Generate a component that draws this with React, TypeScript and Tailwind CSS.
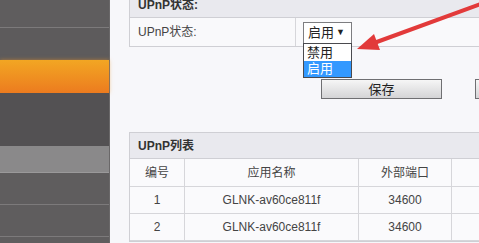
import React from 'react';

const font = { fontFamily: '"Liberation Sans", "Noto Sans CJK SC", sans-serif' };

function Sidebar() {
  return (
    <div className="flex w-[110px] flex-none flex-col border-r border-[#6a6869] bg-[#5f5d5e]">
      <div className="h-[28px] border-b border-[#7c7a7b] bg-[#5f5d5e]" />
      <div className="h-[32px] bg-[#5d5b5c]" />
      <div className="h-[33px] bg-gradient-to-b from-[#f2a623] to-[#ec7b1f] shadow-[0_0_4px_rgba(240,150,40,0.6)]" />
      <div className="h-[53px] bg-[#535153]" />
      <div className="h-[27px] border-b border-[#9a999a] bg-[#8a898a]" />
      <div className="h-[32px] border-b border-[#7c7a7b] bg-[#5f5d5e]" />
      <div className="h-[32px] border-b border-[#7c7a7b] bg-[#5f5d5e]" />
      <div className="flex-1 bg-[#5f5d5e]" />
    </div>
  );
}

function Arrow() {
  return (
    <svg className="pointer-events-none absolute left-0 top-0" width="479" height="243">
      <line x1="486" y1="2" x2="374" y2="43" stroke="#e23a3a" strokeWidth="4" strokeLinecap="round" />
      <polygon points="357,49 374,34 380,50" fill="#e23a3a" />
    </svg>
  );
}

export default function App() {
  const rows = [
    { id: '1', name: 'GLNK-av60ce811f', port: '34600' },
    { id: '2', name: 'GLNK-av60ce811f', port: '34600' },
  ];
  return (
    <div className="relative flex h-[243px] w-[479px] overflow-hidden bg-[#f7f7fa] text-[12px] text-[#333]" style={font}>
      <Sidebar />
      <div className="flex flex-1 flex-col pl-[19px]">
        {/* UPnP status panel */}
        <div className="w-[420px] flex-none border-x border-b border-[#cfcfd4]">
          <div className="h-[18px] border-b border-[#cfcfd4] bg-[#e9e9ee] pl-[8px] text-[12px] font-bold leading-[10px] text-[#333]">
            UPnP状态:
          </div>
          <div className="flex h-[28px] bg-[#f9f9fb]">
            <div className="flex w-[166px] items-center border-r border-[#d6d6da] pl-[8px] text-[#444]">UPnP状态:</div>
            <div className="relative flex-1">
              <div className="absolute left-[7px] top-[4px] z-10 w-[49px]">
                <div className="flex h-[22px] items-center justify-between border border-[#7d7d80] bg-white pl-[4px] pr-[6px] text-[13px] text-[#222]">
                  <span>启用</span>
                  <span className="text-[9px]">▼</span>
                </div>
                <div className="-mt-px border border-[#4a4a4e] bg-white text-[13px]">
                  <div className="h-[17px] pl-[3px] leading-[17px] text-[#222]">禁用</div>
                  <div className="h-[16px] bg-[#3399ff] pl-[3px] leading-[16px] text-white">启用</div>
                </div>
              </div>
            </div>
          </div>
        </div>

        {/* buttons */}
        <div className="mt-[32px] flex h-[20px] flex-none gap-[33px] pl-[192px]">
          <button className="h-[20px] w-[121px] flex-none border border-[#6f6f72] bg-gradient-to-b from-[#f6f6f6] to-[#d4d4d6] text-[13px] text-[#222]">
            保存
          </button>
          <button className="h-[20px] w-[80px] flex-none border border-[#6f6f72] bg-gradient-to-b from-[#f6f6f6] to-[#d4d4d6]" />
        </div>

        {/* UPnP list */}
        <div className="mt-[33px] w-[420px] flex-none border border-[#cfcfd4]">
          <div className="flex h-[26px] items-center border-b border-[#cfcfd4] bg-[#e9e9ee] pl-[8px] font-bold text-[#333]">
            UPnP列表
          </div>
          <div className="grid grid-cols-[55px_174px_93px_1fr] bg-[#fafafc] text-[#444]">
            {['编号', '应用名称', '外部端口', '协议'].map((h, i) => (
              <div key={h} className={`flex h-[28px] items-center justify-center border-b border-[#d6d6da] ${i < 3 ? 'border-r' : ''}`}>
                {h}
              </div>
            ))}
            {rows.map((r) => (
              <React.Fragment key={r.id}>
                <div className="flex h-[27px] items-center justify-center border-b border-r border-[#d6d6da]">{r.id}</div>
                <div className="flex h-[27px] items-center justify-center border-b border-r border-[#d6d6da]">{r.name}</div>
                <div className="flex h-[27px] items-center justify-center border-b border-r border-[#d6d6da]">{r.port}</div>
                <div className="flex h-[27px] items-center justify-center border-b border-[#d6d6da]" />
              </React.Fragment>
            ))}
          </div>
        </div>
      </div>
      <Arrow />
    </div>
  );
}
